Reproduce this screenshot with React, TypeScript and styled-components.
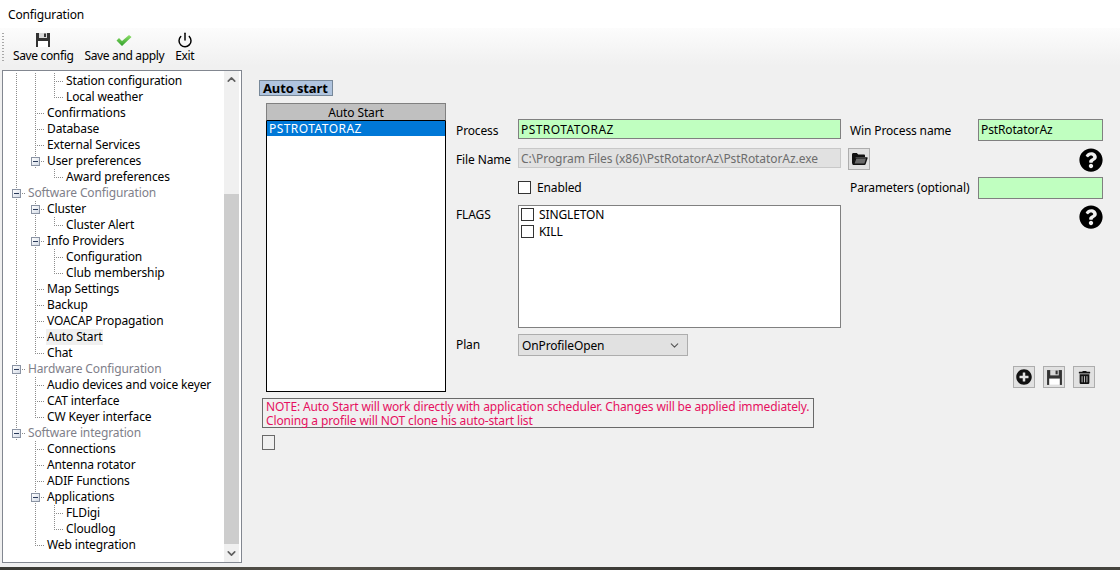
import { ChevronDown, ChevronUp, Power } from 'lucide-react';
import { FaPlusCircle, FaQuestionCircle, FaTrashAlt } from 'react-icons/fa';
import styled, { createGlobalStyle } from 'styled-components';

type GuideKind = 'none' | 'line' | 'branch' | 'end' | 'box';

interface TreeItem {
  label: string;
  guides: GuideKind[];
  header?: boolean;
  selected?: boolean;
}

const treeItems: TreeItem[] = [
  { label: 'Station configuration', guides: ['line', 'line', 'branch'] },
  { label: 'Local weather', guides: ['line', 'line', 'end'] },
  { label: 'Confirmations', guides: ['line', 'branch'] },
  { label: 'Database', guides: ['line', 'branch'] },
  { label: 'External Services', guides: ['line', 'branch'] },
  { label: 'User preferences', guides: ['line', 'box'] },
  { label: 'Award preferences', guides: ['line', 'none', 'end'] },
  { label: 'Software Configuration', guides: ['box'], header: true },
  { label: 'Cluster', guides: ['line', 'box'] },
  { label: 'Cluster Alert', guides: ['line', 'line', 'end'] },
  { label: 'Info Providers', guides: ['line', 'box'] },
  { label: 'Configuration', guides: ['line', 'line', 'branch'] },
  { label: 'Club membership', guides: ['line', 'line', 'end'] },
  { label: 'Map Settings', guides: ['line', 'branch'] },
  { label: 'Backup', guides: ['line', 'branch'] },
  { label: 'VOACAP Propagation', guides: ['line', 'branch'] },
  { label: 'Auto Start', guides: ['line', 'branch'], selected: true },
  { label: 'Chat', guides: ['line', 'end'] },
  { label: 'Hardware Configuration', guides: ['box'], header: true },
  { label: 'Audio devices and voice keyer', guides: ['line', 'branch'] },
  { label: 'CAT interface', guides: ['line', 'branch'] },
  { label: 'CW Keyer interface', guides: ['line', 'end'] },
  { label: 'Software integration', guides: ['box'], header: true },
  { label: 'Connections', guides: ['none', 'branch'] },
  { label: 'Antenna rotator', guides: ['none', 'branch'] },
  { label: 'ADIF Functions', guides: ['none', 'branch'] },
  { label: 'Applications', guides: ['none', 'box'] },
  { label: 'FLDigi', guides: ['none', 'line', 'branch'] },
  { label: 'Cloudlog', guides: ['none', 'line', 'end'] },
  { label: 'Web integration', guides: ['none', 'end'] },
];

const GlobalStyle = createGlobalStyle`
  html, body {
    margin: 0;
    padding: 0;
    background: #f0f0f0;
  }
  body {
    font-family: 'Noto Sans', 'Open Sans', sans-serif;
    font-size: 12px;
    letter-spacing: -0.13px;
    color: #000;
  }
`;

const Window = styled.div`
  width: 1120px;
  height: 570px;
  display: flex;
  flex-direction: column;
  overflow: hidden;
  background: #f0f0f0;
`;

const TitleBar = styled.div`
  height: 28px;
  padding-left: 8px;
  display: flex;
  align-items: center;
  background: #fff;
`;

const Toolbar = styled.div`
  height: 38px;
  padding-left: 2px;
  display: flex;
  align-items: center;
  letter-spacing: -0.35px;
  background: linear-gradient(to bottom, #fcfcfc, #f0f0f0);
`;

const Grip = styled.div`
  width: 2px;
  height: 28px;
  margin-right: 9px;
  background: repeating-linear-gradient(to bottom, #a8a8a8 0 1px, transparent 1px 3px);
`;

const ToolButton = styled.div`
  display: flex;
  flex-direction: column;
  align-items: center;
  margin-right: 11px;
  line-height: 16px;
  white-space: nowrap;
  height: 32px;
  margin-top: 2px;
  justify-content: flex-end;
`;

const ToolIcon = styled.div`
  height: 16px;
  display: flex;
  align-items: center;
  justify-content: center;
`;

const Body = styled.div`
  flex: 1;
  display: flex;
  padding: 4px 0 0 2px;
  min-height: 0;
`;

const Tree = styled.div`
  box-sizing: border-box;
  width: 240px;
  height: 493px;
  display: flex;
  background: #fff;
  border: 1px solid #828790;
`;

const TreeRows = styled.div`
  flex: 1;
  padding: 2px 0 0 4px;
  overflow: hidden;
`;

const TreeRow = styled.div`
  height: 16px;
  display: flex;
  align-items: stretch;
`;

const dots = '#8c8c8c 0 1px, transparent 1px 2px';

const Guide = styled.div<{ $kind: GuideKind }>`
  width: 19px;
  flex: none;
  display: flex;
  align-items: center;
  background-repeat: no-repeat;
  background-image: ${({ $kind }) =>
    $kind === 'none'
      ? 'none'
      : $kind === 'line'
        ? `repeating-linear-gradient(to bottom, ${dots})`
        : `repeating-linear-gradient(to bottom, ${dots}), repeating-linear-gradient(to right, ${dots})`};
  background-size: ${({ $kind }) => ($kind === 'end' ? '1px 8px' : '1px 100%')}, 10px 1px;
  background-position: 9px 0, 9px 8px;
`;

const Expander = styled.div`
  box-sizing: border-box;
  width: 9px;
  height: 9px;
  margin: 1px 0 0 5px;
  display: flex;
  align-items: center;
  justify-content: center;
  background: linear-gradient(135deg, #fff, #d4dbe6);
  border: 1px solid #8a93a3;

  &::after {
    content: '';
    width: 5px;
    height: 1px;
    background: #2a3a5a;
  }
`;

const TreeLabel = styled.div<{ $header?: boolean; $selected?: boolean }>`
  margin-left: 1px;
  padding: 0 1px;
  line-height: 16px;
  white-space: nowrap;
  color: ${({ $header }) => ($header ? '#80808a' : '#000')};
  background: ${({ $selected }) => ($selected ? '#f0f0f0' : 'transparent')};
`;

const ScrollBar = styled.div`
  width: 15px;
  margin-right: 2px;
  display: flex;
  flex-direction: column;
  background: #f0f0f0;
`;

const ScrollArrow = styled.div`
  height: 17px;
  flex: none;
  display: flex;
  align-items: center;
  justify-content: center;
  color: #606060;
`;

const ScrollSpace = styled.div<{ $height: number }>`
  height: ${({ $height }) => $height}px;
  flex: none;
`;

const ScrollThumb = styled.div`
  height: 350px;
  flex: none;
  background: #cdcdcd;
`;

const Content = styled.div`
  flex: 1;
  padding: 10px 0 0 17px;
`;

const Heading = styled.div`
  box-sizing: border-box;
  display: block;
  height: 16px;
  width: 74px;
  padding-left: 3px;
  font-size: 13px;
  font-weight: 700;
  line-height: 15px;
  white-space: nowrap;
  background: #b0c4de;
  border: 1px solid #778899;
`;

const MainRow = styled.div`
  display: flex;
  margin: 7px 0 0 7px;
  height: 289px;
`;

const ListPanel = styled.div`
  box-sizing: border-box;
  width: 180px;
  flex: none;
  display: flex;
  flex-direction: column;
  background: #fff;
  border: 1px solid #000;
  border-top: 0;
`;

const ListHeader = styled.div`
  box-sizing: border-box;
  height: 18px;
  margin: 0 -1px;
  text-align: center;
  line-height: 18px;
  background: #c0c0c0;
  border: 1px solid #808080;
  border-bottom: 1px solid #000;
`;

const ListItem = styled.div`
  height: 15px;
  padding-left: 2px;
  line-height: 15px;
  letter-spacing: 0.45px;
  color: #fff;
  background: #0078d7;
`;

const Form = styled.div`
  margin: 16px 0 0 10px;
  display: grid;
  grid-template-columns: 62px 323px 137px 125px;
  grid-template-rows: 23px 23px 22px 123px 22px 26px;
  row-gap: 6px;
  align-items: start;
`;

const FieldLabel = styled.div<{ $top?: boolean; $inset?: number }>`
  align-self: ${({ $top }) => ($top ? 'start' : 'center')};
  padding-top: ${({ $top }) => ($top ? '2px' : '0')};
  padding-left: ${({ $inset }) => $inset ?? 0}px;
  line-height: 16px;
  white-space: nowrap;
`;

const TextField = styled.div<{ $height?: number; $disabled?: boolean }>`
  box-sizing: border-box;
  height: ${({ $height }) => $height ?? 22}px;
  padding-left: 2px;
  line-height: ${({ $height }) => ($height ?? 22) - 3}px;
  white-space: nowrap;
  overflow: hidden;
  color: ${({ $disabled }) => ($disabled ? '#6d6d6d' : '#000')};
  background: ${({ $disabled }) => ($disabled ? '#e1e1e1' : '#c0ffc0')};
  border: 1px solid ${({ $disabled }) => ($disabled ? '#c8c8c8' : '#808080')};
`;

const ProcessField = styled(TextField)`
  line-height: 19px;
  letter-spacing: 0.45px;
`;

const PathField = styled(TextField)`
  line-height: 19px;
  letter-spacing: -0.07px;
`;

const Check = styled.div`
  box-sizing: border-box;
  width: 13px;
  height: 13px;
  flex: none;
  background: #fff;
  border: 1px solid #333;
`;

const CheckRow = styled.div`
  display: flex;
  align-items: center;
  gap: 5px;
  height: 17px;
  line-height: 17px;
  white-space: nowrap;
`;

const EnabledRow = styled(CheckRow)`
  align-self: center;
  margin-top: -1px;
  gap: 6px;
`;

const FlagList = styled.div`
  box-sizing: border-box;
  height: 123px;
  padding: 0 0 0 2px;
  background: #fff;
  border: 1px solid #808080;
`;

const IconButton = styled.div`
  box-sizing: border-box;
  width: 22px;
  height: 22px;
  display: flex;
  align-items: center;
  justify-content: center;
  color: #111;
  background: #e1e1e1;
  border: 1px solid #adadad;
`;

const FolderButton = styled(IconButton)`
  margin-left: 7px;
`;

const HelpSlot = styled.div`
  display: flex;
  justify-content: flex-end;
  color: #000;
`;

const ComboBox = styled.div`
  box-sizing: border-box;
  width: 170px;
  height: 22px;
  padding: 0 6px 0 3px;
  display: flex;
  align-items: center;
  justify-content: space-between;
  background: #e1e1e1;
  border: 1px solid #adadad;
`;

const ActionBar = styled.div`
  grid-column: 1 / -1;
  align-self: end;
  padding-right: 8px;
  display: flex;
  justify-content: flex-end;
  gap: 8px;
`;

const Note = styled.div`
  box-sizing: border-box;
  width: 552px;
  height: 30px;
  margin: 6px 0 0 3px;
  padding: 1px 0 0 3px;
  line-height: 14px;
  white-space: nowrap;
  color: #e6105f;
  border: 1px solid #696969;
`;

const EmptyBox = styled.div`
  box-sizing: border-box;
  width: 13px;
  height: 15px;
  margin: 7px 0 0 3px;
  border: 1px solid #696969;
`;

const BottomEdge = styled.div`
  height: 3px;
  flex: none;
  background: linear-gradient(to right, #3a3a34, #55524a 30%, #2f2f2c 70%, #45443e);
`;

const FloppyIcon = ({ size = 16 }: { size?: number }) => (
  <svg width={size} height={size} viewBox="0 0 16 16">
    <path d="M1 1h14v14H1z" fill="#333" />
    <path d="M4 1h8v5H4z" fill="#d8d8d8" />
    <path d="M9 1.5h2v3.5H9z" fill="#333" />
    <path d="M3 9h10v6H3z" fill="#fff" />
  </svg>
);

const FolderIcon = () => (
  <svg width="17" height="14" viewBox="0 0 17 14">
    <path d="M1 2.5C1 1.7 1.6 1 2.4 1h3.4l1.4 1.6h6C13.6 2.6 14 3 14 3.6V5H5L2.6 12H2c-.6 0-1-.5-1-1z" fill="#111" />
    <path d="M4.6 5.2h11.2c.6 0 1 .5.8 1.1l-2 6c-.2.5-.6.7-1.1.7H1.4z" fill="#111" />
    <path d="M5.4 6.6h9.6l-1.6 5H3.6z" fill="#6a6a6a" />
  </svg>
);

const CheckIcon = () => (
  <svg width="16" height="13" viewBox="0 0 16 13">
    <defs>
      <linearGradient id="tick" x1="0" y1="0" x2="0" y2="1">
        <stop offset="0" stopColor="#8fe06a" />
        <stop offset="1" stopColor="#2f9e2a" />
      </linearGradient>
    </defs>
    <path d="M0.5 6.5L3 4l3 3 7-6 2.5 2-9.5 9z" fill="url(#tick)" />
  </svg>
);

const App = () => (
  <Window>
    <GlobalStyle />
    <TitleBar>Configuration</TitleBar>
    <Toolbar>
      <Grip />
      <ToolButton>
        <ToolIcon><FloppyIcon /></ToolIcon>
        Save config
      </ToolButton>
      <ToolButton>
        <ToolIcon><CheckIcon /></ToolIcon>
        Save and apply
      </ToolButton>
      <ToolButton>
        <ToolIcon><Power size={16} strokeWidth={2.2} color="#000" /></ToolIcon>
        Exit
      </ToolButton>
    </Toolbar>
    <Body>
      <Tree>
        <TreeRows>
          {treeItems.map((item) => (
            <TreeRow key={item.label}>
              {item.guides.map((kind, i) => (
                <Guide key={i} $kind={kind}>
                  {kind === 'box' && <Expander />}
                </Guide>
              ))}
              <TreeLabel $header={item.header} $selected={item.selected}>
                {item.label}
              </TreeLabel>
            </TreeRow>
          ))}
        </TreeRows>
        <ScrollBar>
          <ScrollArrow><ChevronUp size={13} strokeWidth={3} /></ScrollArrow>
          <ScrollSpace $height={106} />
          <ScrollThumb />
          <ScrollSpace $height={1} />
          <ScrollArrow><ChevronDown size={13} strokeWidth={3} /></ScrollArrow>
        </ScrollBar>
      </Tree>
      <Content>
        <Heading>Auto start</Heading>
        <MainRow>
          <ListPanel>
            <ListHeader>Auto Start</ListHeader>
            <ListItem>PSTROTATORAZ</ListItem>
          </ListPanel>
          <Form>
            <FieldLabel>Process</FieldLabel>
            <ProcessField $height={20}>PSTROTATORAZ</ProcessField>
            <FieldLabel $inset={9}>Win Process name</FieldLabel>
            <TextField>PstRotatorAz</TextField>

            <FieldLabel>File Name</FieldLabel>
            <PathField $height={20} $disabled>
              {'C:\\Program Files (x86)\\PstRotatorAz\\PstRotatorAz.exe'}
            </PathField>
            <FolderButton><FolderIcon /></FolderButton>
            <HelpSlot><FaQuestionCircle size={24} /></HelpSlot>

            <div />
            <EnabledRow><Check />Enabled</EnabledRow>
            <FieldLabel $inset={9}>Parameters (optional)</FieldLabel>
            <TextField />

            <FieldLabel $top>FLAGS</FieldLabel>
            <FlagList>
              <CheckRow><Check />SINGLETON</CheckRow>
              <CheckRow><Check />KILL</CheckRow>
            </FlagList>
            <div />
            <HelpSlot><FaQuestionCircle size={24} /></HelpSlot>

            <FieldLabel>Plan</FieldLabel>
            <ComboBox>
              OnProfileOpen
              <ChevronDown size={13} color="#555" />
            </ComboBox>
            <div />
            <div />

            <ActionBar>
              <IconButton><FaPlusCircle size={16} /></IconButton>
              <IconButton><FloppyIcon size={17} /></IconButton>
              <IconButton><FaTrashAlt size={13} /></IconButton>
            </ActionBar>
          </Form>
        </MainRow>
        <Note>
          NOTE: Auto Start will work directly with application scheduler. Changes will be applied immediately.
          <br />
          Cloning a profile will NOT clone his auto-start list
        </Note>
        <EmptyBox />
      </Content>
    </Body>
    <BottomEdge />
  </Window>
);

export default App;
